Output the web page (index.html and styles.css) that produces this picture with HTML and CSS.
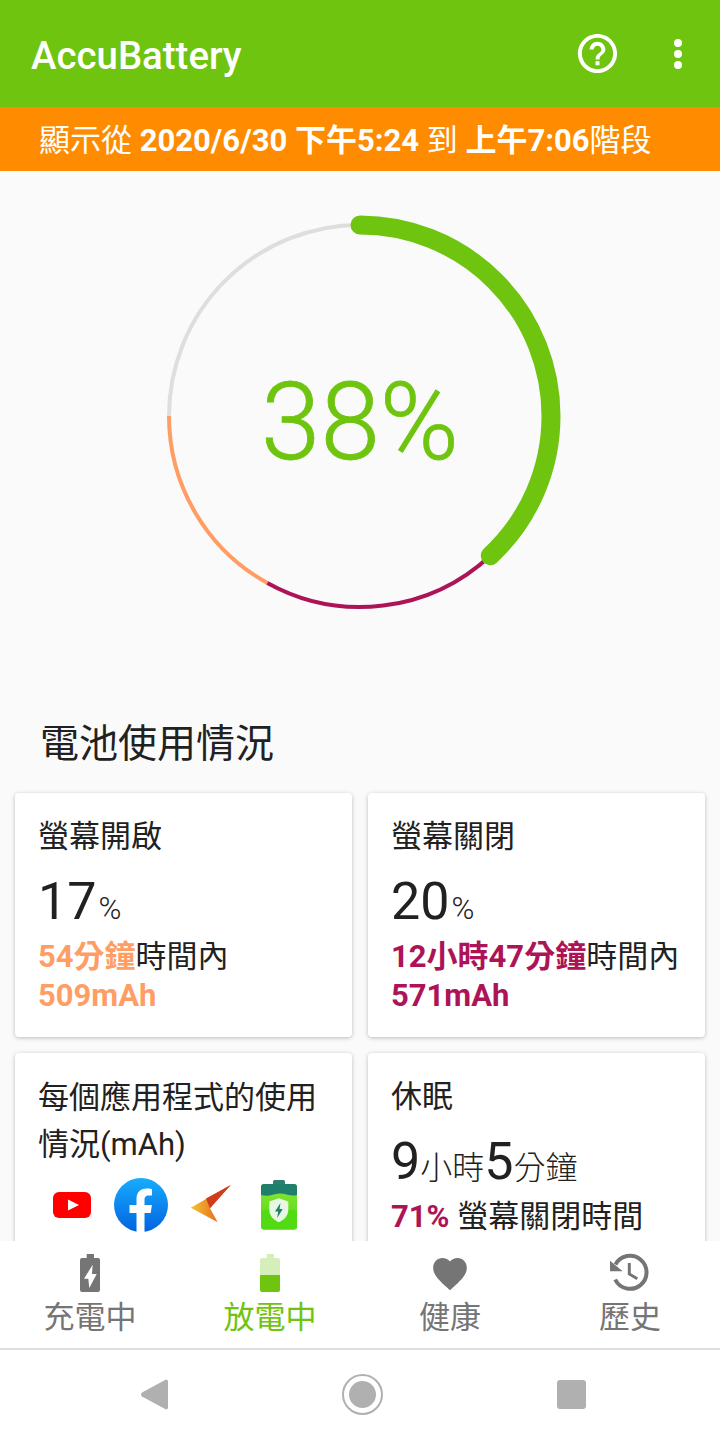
FILE: index.html
```html
<!DOCTYPE html>
<html lang="zh-Hant">
<head>
    <meta charset="UTF-8">
    <title>AccuBattery</title>
    <link rel="stylesheet" href="styles.css">
</head>
<body>
<div class="screen">
    <div class="app-bar">
        <div class="app-title">AccuBattery</div>
        <svg class="help-icon" viewBox="0 0 24 24"><path d="M11 18h2v-2h-2v2zm1-16C6.48 2 2 6.48 2 12s4.48 10 10 10 10-4.48 10-10S17.52 2 12 2zm0 18c-4.41 0-8-3.59-8-8s3.59-8 8-8 8 3.59 8 8-3.59 8-8 8zm0-14c-2.21 0-4 1.79-4 4h2c0-1.1.9-2 2-2s2 .9 2 2c0 2-3 1.75-3 5h2c0-2.25 3-2.5 3-5 0-2.21-1.79-4-4-4z"/></svg>
        <div class="more-icon"><span></span><span></span><span></span></div>
    </div>
    <div class="banner">顯示從 <b>2020/6/30 下午5:24</b> 到 <b>上午7:06</b>階段</div>

    <div class="content">
        <!-- gauge: circle centre 200,200 -->
        <div class="gauge">
            <svg class="gauge-ring" viewBox="0 0 400 400">
                <circle class="arc arc-grey" cx="200" cy="200" r="191" pathLength="360" stroke-dasharray="90 270" stroke-dashoffset="0" transform="rotate(180 200 200)"/>
                <circle class="arc arc-orange" cx="200" cy="200" r="191" pathLength="360" stroke-dasharray="61 299" transform="rotate(119 200 200)"/>
                <circle class="arc arc-purple" cx="200" cy="200" r="191" pathLength="360" stroke-dasharray="72 288" transform="rotate(47 200 200)"/>
                <circle class="arc arc-green" cx="200" cy="200" r="191" pathLength="360" stroke-dasharray="137 223" transform="rotate(-90 200 200)"/>
            </svg>
            <div class="gauge-value">38%</div>
        </div>

        <div class="section-title">電池使用情況</div>

        <div class="cards">
            <div class="card">
                <div class="card-title">螢幕開啟</div>
                <div class="stat">17<small class="pct">%</small></div>
                <div class="card-line"><b class="orange">54分鐘</b>時間內</div>
                <div class="card-line"><b class="orange">509mAh</b></div>
            </div>
            <div class="card">
                <div class="card-title">螢幕關閉</div>
                <div class="stat">20<small class="pct">%</small></div>
                <div class="card-line"><b class="purple">12小時47分鐘</b>時間內</div>
                <div class="card-line"><b class="purple">571mAh</b></div>
            </div>
            <div class="card">
                <div class="card-title wrap">每個應用程式的使用情況(mAh)</div>
                <div class="app-icons">
                    <svg viewBox="0 0 54 54"><rect x="8" y="14" width="38" height="26" rx="6" fill="#f00"/><path d="M23 21.500l11 5.500-11 5.500z" fill="#fff"/></svg>
                    <svg viewBox="0 0 54 54">
                        <defs><linearGradient id="fb" x1="0" y1="0" x2="0" y2="1"><stop offset="0" stop-color="#18acfe"/><stop offset="1" stop-color="#0163e0"/></linearGradient></defs>
                        <circle cx="27" cy="27" r="27" fill="url(#fb)"/>
                        <path d="M22.500 54V35h-7v-8h7v-6c0-7 4-10.500 10-10.500 3 0 5.500.5 5.500.5v6.500h-3.200c-3.300 0-4.300 2-4.300 4.200V27h7.400l-1.200 8h-6.200v19z" fill="#fff"/>
                    </svg>
                    <svg viewBox="0 0 54 54">
                        <defs><linearGradient id="arrow" x1="0" y1="0" x2="1" y2="0"><stop offset="0" stop-color="#f5c52f"/><stop offset=".5" stop-color="#ea8526"/><stop offset="1" stop-color="#dc4f1e"/></linearGradient></defs>
                        <path d="M7.700 29.700L47.700 7 27 30.300l7.700 14z" fill="url(#arrow)"/>
                        <path d="M23 20.500L47.700 7 27 30.300z" fill="#d03c1c"/>
                    </svg>
                    <svg viewBox="0 0 54 54">
                        <defs><linearGradient id="bat" x1="0" y1="0" x2="0" y2="1"><stop offset="0" stop-color="#8ee63a"/><stop offset="1" stop-color="#46d80a"/></linearGradient></defs>
                        <rect x="21" y="2" width="12" height="8" rx="1.500" fill="#2a7f70"/>
                        <rect x="9" y="6" width="36" height="45.500" rx="3" fill="url(#bat)"/>
                        <path d="M9 34c10-5 24-5 36 0v14.500a3 3 0 0 1-3 3H12a3 3 0 0 1-3-3z" fill="#52db12"/>
                        <path d="M9 9a3 3 0 0 1 3-3h30a3 3 0 0 1 3 3v8c-6 2-12-2-18-1.500S17 19 9 17z" fill="#1f7f6c"/>
                        <path d="M26.800 20.300l9.500 3.200v8c0 6-3.800 10.300-9.500 12.800-5.700-2.500-9.500-6.800-9.500-12.800v-8z" fill="#e6f7e4"/>
                        <path d="M28.500 25l-5.500 8.500h3.200l-1 6.500 5.500-9h-3.200z" fill="#1f7f6c"/>
                    </svg>
                </div>
            </div>
            <div class="card">
                <div class="card-title">休眠</div>
                <div class="stat">9<small>小時</small>5<small>分鐘</small></div>
                <div class="card-line"><b class="purple">71%</b> 螢幕關閉時間</div>
            </div>
        </div>
    </div>

    <div class="tabs">
        <div class="tab">
            <svg class="tab-icon" viewBox="0 0 40 40"><path fill-rule="evenodd" d="M16.700 1H24v4h4a2 2 0 0 1 2 2v30a2 2 0 0 1-2 2H12a2 2 0 0 1-2-2V7a2 2 0 0 1 2-2h4.700zM22.700 11.700L14 25.700h4.300L19.300 35l7.400-14H22z" fill="#757575"/></svg>
            <div class="tab-label">充電中</div>
        </div>
        <div class="tab active">
            <svg class="tab-icon" viewBox="0 0 40 40"><path d="M16.700 1H24v4h4a2 2 0 0 1 2 2v15H10V7a2 2 0 0 1 2-2h4.700z" fill="#d6eeb9"/><path d="M10 22h20v15a2 2 0 0 1-2 2H12a2 2 0 0 1-2-2z" fill="#6fc40f"/></svg>
            <div class="tab-label">放電中</div>
        </div>
        <div class="tab">
            <svg class="tab-icon" viewBox="0 0 24 24"><path d="M12 22.350l-1.450-1.320C5.400 16.360 1.900 13.080 1.900 8.900 1.900 5.420 4.420 3 7.500 3c1.740 0 3.410.81 4.500 2.090C13.090 3.810 14.760 3 16.500 3c3.080 0 5.600 2.420 5.600 5.900 0 4.180-3.500 7.460-8.650 12.130z" fill="#757575"/></svg>
            <div class="tab-label">健康</div>
        </div>
        <div class="tab">
            <svg class="tab-icon" viewBox="0 0 40 40">
                <path d="M5.500 11.500A16.500 16.500 0 1 1 5.200 26.500" fill="none" stroke="#757575" stroke-width="4"/>
                <path d="M0 7.700v10.600h12.700z" fill="#757575"/>
                <path d="M19.300 10v11l8 4.700" fill="none" stroke="#757575" stroke-width="3"/>
            </svg>
            <div class="tab-label">歷史</div>
        </div>
    </div>

    <div class="system-nav">
        <svg class="nav-back" viewBox="0 0 27 31"><path d="M25 .5a2 2 0 0 1 2 2v26a2 2 0 0 1-2 2L1 17.500a2.500 2.500 0 0 1 0-4z" fill="#b0b0b0"/></svg>
        <svg class="nav-home" viewBox="0 0 41 41"><circle cx="20.500" cy="20.500" r="19.500" fill="none" stroke="#b0b0b0" stroke-width="2"/><circle cx="20.500" cy="20.500" r="13.500" fill="#b0b0b0"/></svg>
        <div class="nav-recent"></div>
    </div>
</div>
</body>
</html>
```

FILE: styles.css
```css
* {
    box-sizing: border-box;
}
body {
    margin: 0;
    font-family: Roboto, "Noto Sans CJK TC", sans-serif;
    color: #212121;
}
.screen {
    width: 720px;
    height: 1440px;
    display: flex;
    flex-direction: column;
    overflow: hidden;
    background-color: #fafafa;
}
.app-bar {
    height: 107px;
    flex: none;
    display: flex;
    align-items: center;
    padding-left: 31px;
    background-color: #6fc40f;
    color: #fff;
}
.app-title {
    flex: 1;
    padding-top: 4px;
    font-size: 38.400px;
    font-weight: 500;
}
.help-icon {
    width: 47px;
    height: 47px;
    fill: #fff;
}
.more-icon {
    width: 8px;
    display: flex;
    flex-direction: column;
    gap: 3px;
    margin-left: 53px;
    margin-right: 38px;
}
.more-icon span {
    width: 8px;
    height: 8px;
    border-radius: 50%;
    background-color: #fff;
}
.banner {
    height: 64px;
    flex: none;
    padding-left: 39px;
    background-color: #ff8c00;
    color: #fff;
    font-size: 31px;
    line-height: 67px;
    white-space: nowrap;
}
.banner b {
    font-weight: 700;
}
.content {
    flex: 1;
    min-height: 0;
    overflow: hidden;
}
.gauge {
    position: relative;
    width: 400px;
    height: 400px;
    margin: 45px auto 0;
}
.gauge-ring {
    display: block;
    width: 400px;
    height: 400px;
    overflow: visible;
}
.arc {
    fill: none;
    stroke-width: 4;
}
.arc-grey {
    stroke: #dedede;
}
.arc-orange {
    stroke: #ff9e64;
}
.arc-purple {
    stroke: #ad1457;
}
.arc-green {
    stroke: #6fc40f;
    stroke-width: 19;
    stroke-linecap: round;
}
.gauge-value {
    position: absolute;
    top: 0;
    left: 0;
    width: 100%;
    height: 100%;
    padding-top: 12px;
    display: flex;
    align-items: center;
    justify-content: center;
    color: #6fc40f;
    font-size: 107px;
    font-weight: 300;
    -webkit-text-stroke: 0.8px #6fc40f;
}
.section-title {
    margin-top: 100px;
    padding-left: 40px;
    font-size: 39px;
    line-height: 56px;
}
.cards {
    display: grid;
    grid-template-columns: 337px 337px;
    grid-auto-rows: 244px;
    gap: 16px;
    padding-left: 15px;
    margin-top: 21px;
}
.card {
    padding: 23px 23px 0;
    border-radius: 4px;
    background-color: #fff;
    box-shadow: 0 1px 4px rgba(0, 0, 0, 0.25);
}
.card-title {
    font-size: 31px;
    line-height: 42px;
    white-space: nowrap;
}
.card-title.wrap {
    white-space: normal;
    line-height: 47px;
    margin-top: -2px;
}
.stat {
    margin-top: 15px;
    font-size: 52px;
    line-height: 57px;
    white-space: nowrap;
}
.stat small {
    font-size: 32px;
    font-weight: 300;
}
.stat small.pct {
    font-size: 31px;
    margin-left: 2px;
}
.card-line {
    font-size: 31px;
    line-height: 39px;
    white-space: nowrap;
}
.card-line b {
    font-weight: 700;
}
.orange {
    color: #ff9e64;
}
.purple {
    color: #ad1457;
}
.app-icons {
    display: flex;
    gap: 15px;
    margin-top: 10px;
    margin-left: 7px;
}
.app-icons svg {
    width: 54px;
    height: 54px;
    flex: none;
}
.tabs {
    height: 109px;
    flex: none;
    display: flex;
    background-color: #fff;
    border-bottom: 2px solid #dedede;
}
.tab {
    width: 180px;
    display: flex;
    flex-direction: column;
    align-items: center;
    padding-top: 12px;
    color: #757575;
}
.tab.active {
    color: #6fc40f;
}
.tab-icon {
    width: 40px;
    height: 40px;
    overflow: visible;
}
.tab-label {
    margin-top: 2px;
    font-size: 31px;
    line-height: 46px;
}
.system-nav {
    height: 90px;
    flex: none;
    display: flex;
    align-items: center;
    gap: 174px;
    padding-left: 141px;
    padding-bottom: 2px;
    background-color: #fff;
}
.nav-back {
    width: 27px;
    height: 31px;
}
.nav-home {
    width: 41px;
    height: 41px;
}
.nav-recent {
    width: 29px;
    height: 29px;
    border-radius: 3px;
    background-color: #b0b0b0;
}
```
